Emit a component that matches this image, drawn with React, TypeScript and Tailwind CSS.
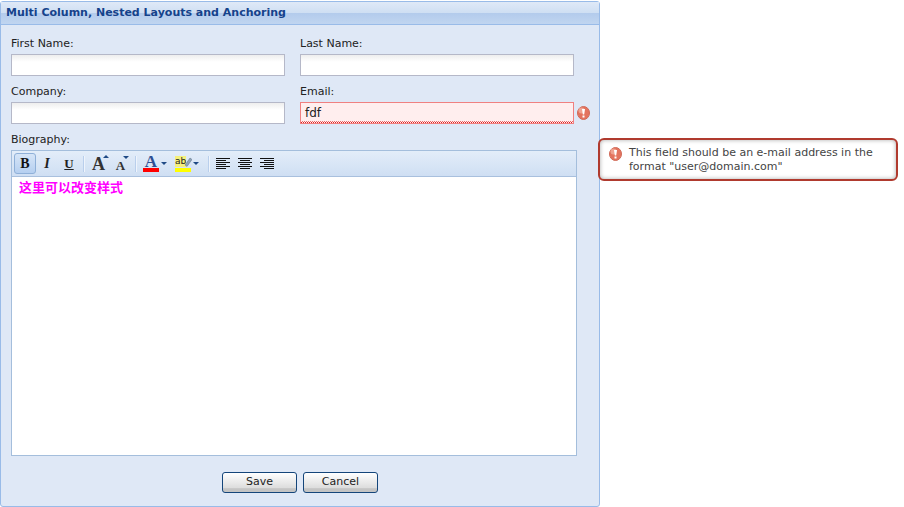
import React from 'react';

const font = '[font-family:Tahoma,"DejaVu_Sans",sans-serif]';
const serif = "font-['Liberation_Serif'] font-bold";

const ErrorIcon = () => (
  <svg width="13" height="14" viewBox="0 0 13 14">
    <ellipse cx="6.5" cy="7" rx="6" ry="6.5" fill="#e4745f" stroke="#cf6a58" />
    <ellipse cx="4.5" cy="4.5" rx="3" ry="3" fill="#f4b6a6" opacity="0.7" />
    <path d="M5 3h3L7.2 8.5H5.8z" fill="#fff" />
    <rect x="5.5" y="9.5" width="2" height="2" fill="#fff" />
  </svg>
);

const Caret = ({ up = false }: { up?: boolean }) => (
  <svg width="6" height="3" viewBox="0 0 6 3">
    <path d={up ? 'M3 0l3 3H0z' : 'M0 0h6L3 3z'} fill="#1f4a85" />
  </svg>
);

const Sep = () => <div className="w-[2px] h-[16px] mx-[3px] bg-[#b9cfec] border-r border-[#eef4fc]" />;

const AlignIcon = ({ lines }: { lines: [number, number][] }) => (
  <svg width="16" height="14" viewBox="0 0 16 14">
    {lines.map(([x, w], i) => (
      <rect key={i} x={x} y={1 + i * 2} width={w} height="1" fill="#111" />
    ))}
  </svg>
);

const Field = ({ label }: { label: string }) => (
  <div className="flex flex-col">
    <label className="h-[17px] text-[11px] leading-[14px] text-[#222]">{label}</label>
    <input readOnly className="w-[274px] h-[22px] border border-[#b5b8c8] bg-gradient-to-b from-[#eeeeee] to-white to-[35%] outline-none" />
  </div>
);

export default function App() {
  return (
    <div className={`relative w-[904px] h-[507px] bg-white overflow-hidden pt-px ${font}`}>
      <div className="w-[600px] h-[506px] flex flex-col border border-[#99bbe8] rounded-[3px] bg-[#dfe8f6]">
        <div className="h-[23px] shrink-0 flex items-center pl-[5px] pt-[1px] border-b border-[#99bbe8] bg-[linear-gradient(#dfe9f7_0%,#cfdff3_48%,#b3cbec_50%,#c0d5f0_100%)] text-[11px] font-bold text-[#15428b]">
          Multi Column, Nested Layouts and Anchoring
        </div>
        <div className="flex-1 flex flex-col pl-[10px] pt-[12px]">
          <div className="flex gap-[15px]">
            <Field label="First Name:" />
            <Field label="Last Name:" />
          </div>
          <div className="flex gap-[15px] mt-[9px]">
            <Field label="Company:" />
            <div className="flex flex-col">
              <label className="h-[17px] text-[11px] leading-[14px] text-[#222]">Email:</label>
              <div className="flex items-center gap-[3px]">
                <div className="w-[274px] h-[22px] flex flex-col border border-[#f08080] bg-[#ffeeee]">
                  <div className="flex-1 pl-[4px] pt-[2px] text-[12px] leading-[16px] text-[#222]">fdf</div>
                  <svg width="272" height="2" className="block">
                    <defs>
                      <pattern id="wave" width="2" height="2" patternUnits="userSpaceOnUse">
                        <rect x="0" y="1" width="1" height="1" fill="#dd2222" />
                        <rect x="1" y="0" width="1" height="1" fill="#e86a6a" />
                      </pattern>
                    </defs>
                    <rect width="272" height="2" fill="url(#wave)" />
                  </svg>
                </div>
                <ErrorIcon />
              </div>
            </div>
          </div>
          <label className="mt-[8px] h-[18px] text-[11px] leading-[15px] text-[#222]">Biography:</label>
          <div className="w-[566px] h-[306px] flex flex-col border border-[#a4bedc] bg-white">
            <div className="h-[26px] shrink-0 flex items-center pl-[2px] border-b border-[#a9c0de] bg-gradient-to-b from-[#e3edf9] to-[#cfdff3]">
              <div className={`w-[22px] h-[21px] flex items-center justify-center rounded-[3px] border border-[#8fb0d8] bg-gradient-to-b from-[#d6e5f7] to-[#b5cff0] ${serif} text-[14px] text-[#111]`}>B</div>
              <div className={`w-[22px] text-center ${serif} italic text-[14px] text-[#222]`}>I</div>
              <div className={`w-[22px] text-center ${serif} underline text-[13px] text-[#222]`}>U</div>
              <Sep />
              <div className="w-[22px] flex justify-center items-start pl-[3px] text-[#333]">
                <span className={`${serif} text-[18px] leading-none -mr-[2px]`}>A</span>
                <Caret up />
              </div>
              <div className="w-[22px] flex justify-center items-start pl-[3px] text-[#333]">
                <span className={`${serif} text-[13px] leading-none mt-[3px] -mr-[2px]`}>A</span>
                <Caret />
              </div>
              <Sep />
              <div className="w-[28px] ml-[3px] flex items-center">
                <div className="flex flex-col items-center w-[16px]">
                  <span className={`${serif} text-[17px] leading-[13px] text-[#2f4f94]`}>A</span>
                  <div className="w-[16px] h-[4px] bg-[#ff0000]" />
                </div>
                <div className="ml-[2px]"><Caret /></div>
              </div>
              <div className="w-[30px] ml-[4px] flex items-center">
                <div className="flex flex-col w-[16px]">
                  <div className="flex items-center h-[13px]">
                    <span className="shrink-0 text-[9px] leading-[11px] bg-[#f5f07a] text-[#222]">ab</span>
                    <svg width="7" height="10" viewBox="0 0 7 10" className="shrink-0 -ml-[1px]">
                      <path d="M0 8L5 1l2 1.5L2 9.5z" fill="#8fa3b8" stroke="#5d7186" strokeWidth="0.5" />
                    </svg>
                  </div>
                  <div className="w-[16px] h-[4px] bg-[#ffff00]" />
                </div>
                <div className="ml-[2px]"><Caret /></div>
              </div>
              <Sep />
              <div className="flex ml-[3px] gap-[6px]">
                <AlignIcon lines={[[0, 14], [0, 10], [0, 14], [0, 10], [0, 14], [0, 10]]} />
                <AlignIcon lines={[[0, 14], [2, 10], [0, 14], [2, 10], [0, 14], [2, 10]]} />
                <AlignIcon lines={[[0, 14], [4, 10], [0, 14], [4, 10], [0, 14], [4, 10]]} />
              </div>
            </div>
            <div className="flex-1 pl-[7px] pt-[2px] text-[13px] leading-[16px] font-bold text-[#ff00ff] [font-family:'Noto_Sans_CJK_SC',sans-serif]">这里可以改变样式</div>
          </div>
          <div className="-ml-[10px] w-[598px] flex justify-center gap-[6px] mt-[16px]">
            <button className="w-[75px] h-[21px] rounded-[3px] border border-[#14457a] bg-[linear-gradient(#ffffff_0%,#dcdcdc_80%,#c4c4c4_82%,#c4c4c4_100%)] text-[11px] text-[#222]">Save</button>
            <button className="w-[75px] h-[21px] rounded-[3px] border border-[#14457a] bg-[linear-gradient(#ffffff_0%,#dcdcdc_80%,#c4c4c4_82%,#c4c4c4_100%)] text-[11px] text-[#222]">Cancel</button>
          </div>
        </div>
      </div>
      <div className="absolute left-[598px] top-[138px] w-[300px] h-[43px] flex gap-[7px] pl-[9px] pt-[6px] rounded-[6px] border-2 border-[#b03a2e] bg-white shadow-[inset_0_0_4px_#aaa] text-[11px] leading-[14px] text-[#444]">
        <div className="shrink-0 mt-[1px]"><ErrorIcon /></div>
        <div className="w-[250px]">This field should be an e-mail address in the format "user@domain.com"</div>
      </div>
    </div>
  );
}
